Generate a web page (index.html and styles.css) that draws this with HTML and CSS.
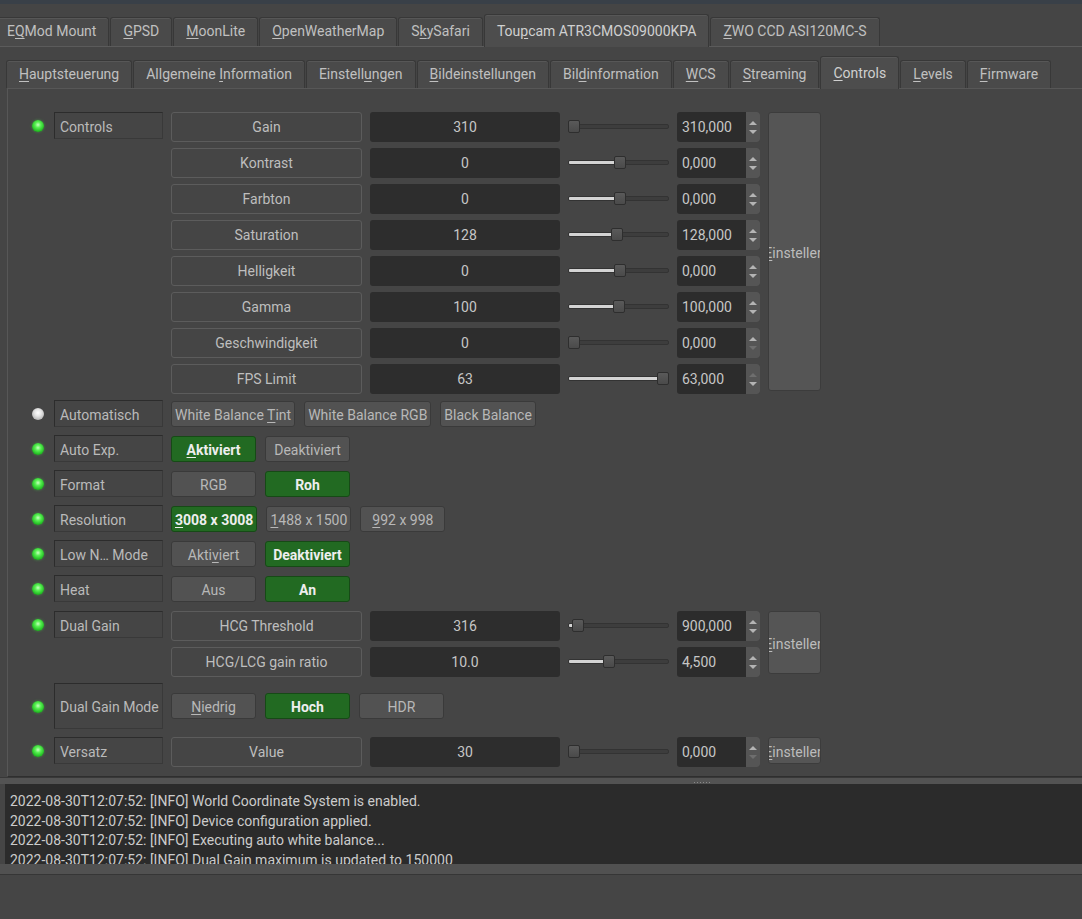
FILE: index.html
```html
<!DOCTYPE html>
<html>
<head>
    <title>Toupcam Controls</title>
    <link rel="stylesheet" href="styles.css">
</head>
<body>
    <div class="titlebar"></div>

    <div class="tabbar outer">
        <div class="tab">E<u>Q</u>Mod Mount</div>
        <div class="tab"><u>G</u>PSD</div>
        <div class="tab"><u>M</u>oonLite</div>
        <div class="tab"><u>O</u>penWeatherMap</div>
        <div class="tab">S<u>k</u>ySafari</div>
        <div class="tab active">Tou<u>p</u>cam ATR3CMOS09000KPA</div>
        <div class="tab"><u>Z</u>WO CCD ASI120MC-S</div>
    </div>

    <div class="pane">
        <div class="tabbar inner">
            <div class="tab"><u>H</u>auptsteuerung</div>
            <div class="tab">Allgemeine <u>I</u>nformation</div>
            <div class="tab">Einstell<u>u</u>ngen</div>
            <div class="tab"><u>B</u>ildeinstellungen</div>
            <div class="tab">Bil<u>d</u>information</div>
            <div class="tab"><u>W</u>CS</div>
            <div class="tab"><u>S</u>treaming</div>
            <div class="tab active"><u>C</u>ontrols</div>
            <div class="tab"><u>L</u>evels</div>
            <div class="tab"><u>F</u>irmware</div>
        </div>

        <div class="panel">
            <!-- numbers -->
            <div class="group first">
                <span class="led on"></span>
                <div class="label">Controls</div>
                <div class="stack">
                    <div class="prow">
                        <div class="pname">Gain</div>
                        <div class="pvalue">310</div>
                        <div class="slider" style="--pos:0px"><span class="fill"></span><span class="handle"></span></div>
                        <div class="spin"><span class="spin-text">310,000</span><span class="spin-btns"></span></div>
                    </div>
                    <div class="prow">
                        <div class="pname">Kontrast</div>
                        <div class="pvalue">0</div>
                        <div class="slider" style="--pos:46px"><span class="fill"></span><span class="handle"></span></div>
                        <div class="spin"><span class="spin-text">0,000</span><span class="spin-btns"></span></div>
                    </div>
                    <div class="prow">
                        <div class="pname">Farbton</div>
                        <div class="pvalue">0</div>
                        <div class="slider" style="--pos:46px"><span class="fill"></span><span class="handle"></span></div>
                        <div class="spin"><span class="spin-text">0,000</span><span class="spin-btns"></span></div>
                    </div>
                    <div class="prow">
                        <div class="pname">Saturation</div>
                        <div class="pvalue">128</div>
                        <div class="slider" style="--pos:43px"><span class="fill"></span><span class="handle"></span></div>
                        <div class="spin"><span class="spin-text">128,000</span><span class="spin-btns"></span></div>
                    </div>
                    <div class="prow">
                        <div class="pname">Helligkeit</div>
                        <div class="pvalue">0</div>
                        <div class="slider" style="--pos:46px"><span class="fill"></span><span class="handle"></span></div>
                        <div class="spin"><span class="spin-text">0,000</span><span class="spin-btns"></span></div>
                    </div>
                    <div class="prow">
                        <div class="pname">Gamma</div>
                        <div class="pvalue">100</div>
                        <div class="slider" style="--pos:45px"><span class="fill"></span><span class="handle"></span></div>
                        <div class="spin"><span class="spin-text">100,000</span><span class="spin-btns"></span></div>
                    </div>
                    <div class="prow">
                        <div class="pname">Geschwindigkeit</div>
                        <div class="pvalue">0</div>
                        <div class="slider" style="--pos:0px"><span class="fill"></span><span class="handle"></span></div>
                        <div class="spin"><span class="spin-text">0,000</span><span class="spin-btns no-down"></span></div>
                    </div>
                    <div class="prow">
                        <div class="pname">FPS Limit</div>
                        <div class="pvalue">63</div>
                        <div class="slider" style="--pos:89px"><span class="fill"></span><span class="handle"></span></div>
                        <div class="spin"><span class="spin-text">63,000</span><span class="spin-btns no-up"></span></div>
                    </div>
                </div>
                <div class="set-btn"><span><u>E</u>instellen</span></div>
            </div>

            <!-- switches -->
            <div class="group switch">
                <span class="led idle"></span>
                <div class="label">Automatisch</div>
                <div class="options">
                    <div class="opt">White Balance <u>T</u>int</div>
                    <div class="opt">White Balance RGB</div>
                    <div class="opt">Black Balance</div>
                </div>
            </div>

            <div class="group switch">
                <span class="led on"></span>
                <div class="label">Auto Exp.</div>
                <div class="options">
                    <div class="opt on"><u>A</u>ktiviert</div>
                    <div class="opt">Deaktiviert</div>
                </div>
            </div>

            <div class="group switch">
                <span class="led on"></span>
                <div class="label">Format</div>
                <div class="options">
                    <div class="opt">RGB</div>
                    <div class="opt on">Roh</div>
                </div>
            </div>

            <div class="group switch">
                <span class="led on"></span>
                <div class="label">Resolution</div>
                <div class="options">
                    <div class="opt on"><u>3</u>008 x 3008</div>
                    <div class="opt"><u>1</u>488 x 1500</div>
                    <div class="opt"><u>9</u>92 x 998</div>
                </div>
            </div>

            <div class="group switch">
                <span class="led on"></span>
                <div class="label">Low N… Mode</div>
                <div class="options">
                    <div class="opt">Akti<u>v</u>iert</div>
                    <div class="opt on">Deaktiviert</div>
                </div>
            </div>

            <div class="group switch">
                <span class="led on"></span>
                <div class="label">Heat</div>
                <div class="options">
                    <div class="opt">Aus</div>
                    <div class="opt on">An</div>
                </div>
            </div>

            <div class="group shifted">
                <span class="led on"></span>
                <div class="label">Dual Gain</div>
                <div class="stack">
                    <div class="prow">
                        <div class="pname">HCG Threshold</div>
                        <div class="pvalue">316</div>
                        <div class="slider" style="--pos:4px"><span class="fill"></span><span class="handle"></span></div>
                        <div class="spin"><span class="spin-text">900,000</span><span class="spin-btns"></span></div>
                    </div>
                    <div class="prow">
                        <div class="pname">HCG/LCG gain ratio</div>
                        <div class="pvalue">10.0</div>
                        <div class="slider" style="--pos:35px"><span class="fill"></span><span class="handle"></span></div>
                        <div class="spin"><span class="spin-text">4,500</span><span class="spin-btns"></span></div>
                    </div>
                </div>
                <div class="set-btn"><span><u>E</u>instellen</span></div>
            </div>

            <div class="group switch shifted">
                <span class="led on"></span>
                <div class="label tall">Dual Gain Mode</div>
                <div class="options">
                    <div class="opt"><u>N</u>iedrig</div>
                    <div class="opt on">Hoch</div>
                    <div class="opt">HDR</div>
                </div>
            </div>

            <div class="group">
                <span class="led on"></span>
                <div class="label">Versatz</div>
                <div class="stack">
                    <div class="prow">
                        <div class="pname">Value</div>
                        <div class="pvalue">30</div>
                        <div class="slider" style="--pos:0px"><span class="fill"></span><span class="handle"></span></div>
                        <div class="spin"><span class="spin-text">0,000</span><span class="spin-btns no-down"></span></div>
                    </div>
                </div>
                <div class="set-btn"><span><u>E</u>instellen</span></div>
            </div>
        </div>
    </div>

    <div class="splitter"><span class="grip"></span></div>

    <div class="log">
        <div>2022-08-30T12:07:52: [INFO] World Coordinate System is enabled.</div>
        <div>2022-08-30T12:07:52: [INFO] Device configuration applied.</div>
        <div>2022-08-30T12:07:52: [INFO] Executing auto white balance...</div>
        <div>2022-08-30T12:07:52: [INFO] Dual Gain maximum is updated to 150000</div>
    </div>
    <div class="log-foot"></div>
</body>
</html>
```

FILE: styles.css
```css
body {
    margin: 0;
    width: 1082px;
    height: 919px;
    overflow: hidden;
    background-color: #454545;
    font-family: Roboto, "Noto Sans", sans-serif;
    font-size: 14px;
    color: #c0c0c0;
}

u {
    text-underline-offset: 2px;
}

.titlebar {
    height: 4px;
    background-color: #394048;
}

/* Tabs */
.tabbar {
    display: flex;
    align-items: flex-end;
}

.tabbar.outer {
    height: 42px;
    margin-left: -6px;
}

.tabbar.inner {
    height: 41px;
    margin-left: -1px;
}

.tab {
    height: 29px;
    box-sizing: border-box;
    padding: 0 12px;
    margin-right: 1px;
    line-height: 27px;
    white-space: nowrap;
    border: 1px solid #383838;
    border-bottom: 0;
    border-radius: 3px 3px 0 0;
    background-color: #4a4a4a;
    box-shadow: inset 0 1px 0 #575757;
}

.tabbar.inner .tab {
    height: 28px;
    line-height: 26px;
}

.tab.active,
.tabbar.inner .tab.active {
    position: relative;
    z-index: 1;
    height: 33px;
    margin-bottom: -1px;
    line-height: 33px;
    background-color: #4d4d4d;
    color: #d0d0d0;
}

.pane {
    border-top: 1px solid #5b5b5b;
    padding-left: 7px;
}

/* Controls panel */
.panel {
    height: 689px;
    box-sizing: border-box;
    padding-top: 23px;
    border: 1px solid #575757;
    border-right: 0;
    border-bottom-color: #2f2f2f;
    display: flex;
    flex-direction: column;
    gap: 8px;
}

.group {
    display: grid;
    grid-template-columns: 38px 109px 589px 53px;
    column-gap: 8px;
    align-items: start;
}

.group.switch {
    align-items: center;
}

.group.first {
    margin-bottom: 1px;
}

.group.shifted {
    margin-top: 1px;
}

.led {
    justify-self: end;
    width: 12px;
    height: 12px;
    margin: 8px 2px 0 0;
    border-radius: 50%;
}

.switch .led {
    margin-top: 1px;
}

.led.on {
    background: radial-gradient(circle at 50% 40%, #c8ffc0 0, #58f052 30%, #26c226 65%, #177a17 100%);
    box-shadow: 0 0 3px rgba(70, 230, 70, 0.45);
}

.led.idle {
    background: radial-gradient(circle at 50% 40%, #ffffff 0, #e6e6e6 35%, #b8b8b8 75%, #8a8a8a 100%);
}

.label {
    height: 27px;
    box-sizing: border-box;
    padding-left: 5px;
    line-height: 28px;
    white-space: nowrap;
    overflow: hidden;
    color: #bababa;
    border: 1px solid #2c2c2c;
    border-right-color: #393939;
    border-bottom-color: #393939;
}

.label.tall {
    height: 46px;
    line-height: 47px;
}

.stack {
    display: flex;
    flex-direction: column;
    gap: 9px;
}

.prow {
    display: grid;
    grid-template-columns: 191px 190px 101px 83px;
    column-gap: 8px;
    height: 27px;
}

.pname {
    box-sizing: border-box;
    border: 1px solid #5c5c5c;
    border-radius: 3px;
    text-align: center;
    line-height: 28px;
    color: #bebebe;
    white-space: nowrap;
}

.pvalue {
    background-color: #2d2d2d;
    border-radius: 3px;
    text-align: center;
    line-height: 30px;
    color: #c6c6c6;
}

/* Slider */
.slider {
    position: relative;
}

.slider::before {
    content: "";
    position: absolute;
    left: 0;
    right: 0;
    top: 12px;
    height: 5px;
    box-sizing: border-box;
    border: 1px solid #333;
    border-radius: 2px;
    background-color: #3d3d3d;
}

.fill {
    position: absolute;
    left: 1px;
    top: 13px;
    height: 3px;
    width: var(--pos);
    border-radius: 1px;
    background-color: #d4d4d4;
}

.handle {
    position: absolute;
    left: var(--pos);
    top: 8px;
    width: 12px;
    height: 13px;
    box-sizing: border-box;
    border: 1px solid #2e2e2e;
    border-radius: 2px;
    background: linear-gradient(#5a5a5a, #4a4a4a);
}

/* Spin box */
.spin {
    display: flex;
    background-color: #2c2c2c;
    border-radius: 3px;
    overflow: hidden;
}

.spin-text {
    flex: 1;
    padding-left: 5px;
    line-height: 30px;
    color: #c6c6c6;
}

.spin-btns {
    width: 14px;
    background-color: #555;
    display: flex;
    flex-direction: column;
    align-items: center;
    justify-content: center;
    gap: 5px;
}

.spin-btns::before,
.spin-btns::after {
    content: "";
    width: 0;
    height: 0;
    border-left: 4px solid transparent;
    border-right: 4px solid transparent;
}

.spin-btns::before {
    border-bottom: 4px solid #b4b4b4;
}

.spin-btns::after {
    border-top: 4px solid #b4b4b4;
}

.spin-btns.no-up::before {
    border-bottom-color: #6e6e6e;
}

.spin-btns.no-down::after {
    border-top-color: #6e6e6e;
}

.set-btn {
    align-self: stretch;
    display: flex;
    align-items: center;
    justify-content: center;
    padding-top: 3px;
    overflow: hidden;
    white-space: nowrap;
    box-sizing: border-box;
    border: 1px solid #3c3c3c;
    border-radius: 3px;
    background-color: #555;
    color: #bcbcbc;
}

/* Switch buttons */
.options {
    display: flex;
    gap: 9px;
}

.opt {
    min-width: 85px;
    height: 26px;
    box-sizing: border-box;
    padding: 0 3px;
    line-height: 27px;
    text-align: center;
    white-space: nowrap;
    border: 1px solid #3a3a3a;
    border-radius: 3px;
    background-color: #525252;
    color: #b8b8b8;
}

.opt.on {
    background-color: #226a22;
    border-color: #164a16;
    color: #eeeeee;
    font-weight: bold;
}

/* Splitter and log */
.splitter {
    height: 7px;
    box-sizing: border-box;
    border-top: 1px solid #383838;
    background-color: #535353;
}

.grip {
    display: block;
    width: 17px;
    height: 1px;
    margin: 4px 0 0 694px;
    background: repeating-linear-gradient(90deg, #8a8a8a 0 1px, transparent 1px 3px);
}

.log {
    height: 80px;
    box-sizing: border-box;
    margin-left: 5px;
    padding: 8px 0 0 5px;
    overflow: hidden;
    white-space: nowrap;
    line-height: 19.5px;
    background-color: #2b2b2b;
    color: #cbcbcb;
}

.log-foot {
    height: 10px;
    background-color: #515151;
    border-bottom: 1px solid #363636;
}
```
